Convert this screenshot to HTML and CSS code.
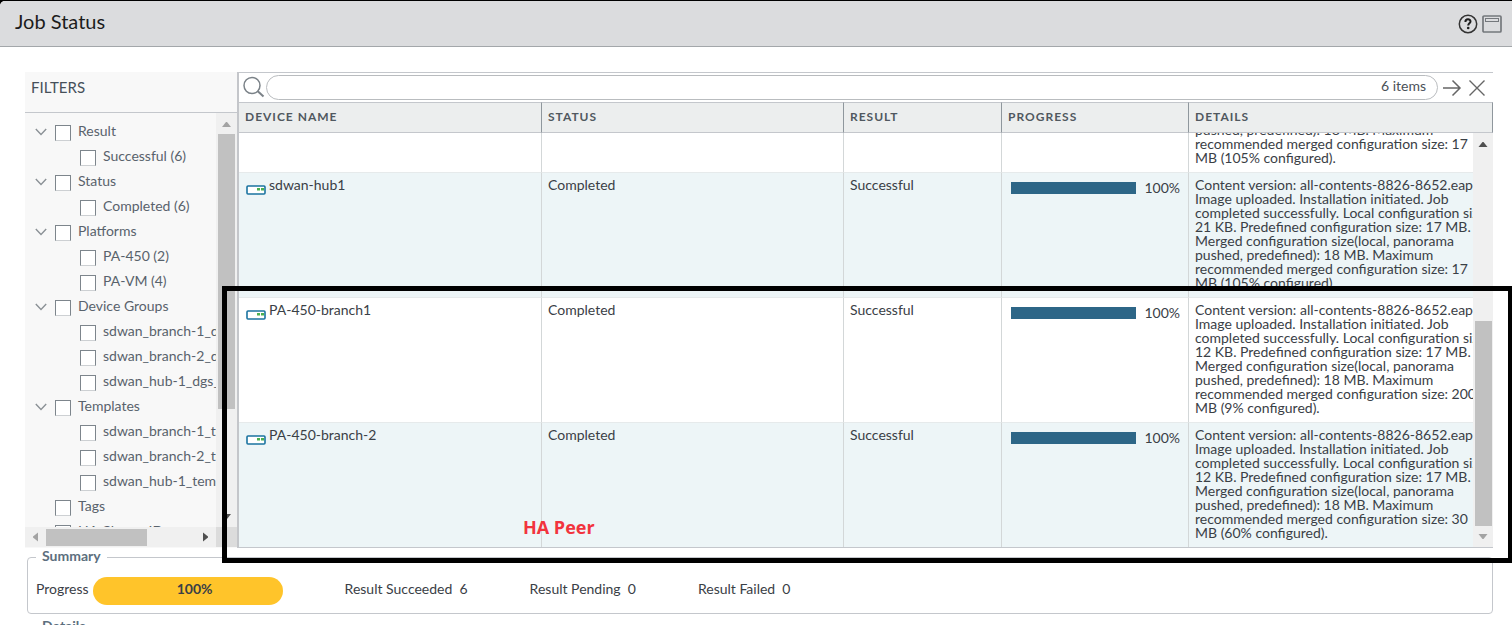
FILE: index.html
```html
<!DOCTYPE html>
<html lang="en">
<head>
<meta charset="utf-8">
<title>Job Status</title>
<link rel="stylesheet" href="styles.css">
</head>
<body>
<svg class="defs" aria-hidden="true">
  <symbol id="device" viewBox="0 0 20 10"><rect x="1" y="1" width="18" height="8" rx="1" fill="#fff" stroke="#1a73a0" stroke-width="1.6"/><path d="M11 3h3v2.400h-3zM15 3h3v2.400h-3z" fill="#4bb04f"/></symbol>
  <symbol id="chevron" viewBox="0 0 12 8"><path d="M.8 1 6 6.400 11.200 1" fill="none" stroke="#8b9196" stroke-width="1.400"/></symbol>
</svg>
<main class="dialog">
  <header class="titlebar">
    <h1 class="title">Job Status</h1>
    <button class="icon-button" type="button" aria-label="Help"><svg width="20" height="20" viewBox="0 0 20 20"><circle cx="10" cy="10" r="8.700" fill="none" stroke="#333" stroke-width="1.500"/><path d="M7.400 7.900c0-3.400 5.100-3.300 5.100-.5 0 1.900-2.300 1.900-2.300 4.200" fill="none" stroke="#1e1e1e" stroke-width="2"/><circle cx="10.200" cy="14" r="1.300" fill="#1e1e1e"/></svg></button>
    <button class="icon-button" type="button" aria-label="Maximize"><svg width="20" height="18" viewBox="0 0 20 18"><rect x="1" y="1" width="18" height="16" rx="1" fill="none" stroke="#74787c" stroke-width="1.700"/><rect x="3.500" y="3.500" width="13" height="3" fill="none" stroke="#74787c"/></svg></button>
  </header>

  <div class="content">
    <section class="workspace">
      <aside class="filters">
        <h2 class="filters-title">FILTERS</h2>
        <div class="filters-body">
          <ul class="tree">
            <li class="node"><svg class="chevron"><use href="#chevron"/></svg><label class="choice"><input type="checkbox">Result</label></li>
            <li class="node leaf"><label class="choice"><input type="checkbox">Successful (6)</label></li>
            <li class="node"><svg class="chevron"><use href="#chevron"/></svg><label class="choice"><input type="checkbox">Status</label></li>
            <li class="node leaf"><label class="choice"><input type="checkbox">Completed (6)</label></li>
            <li class="node"><svg class="chevron"><use href="#chevron"/></svg><label class="choice"><input type="checkbox">Platforms</label></li>
            <li class="node leaf"><label class="choice"><input type="checkbox">PA-450 (2)</label></li>
            <li class="node leaf"><label class="choice"><input type="checkbox">PA-VM (4)</label></li>
            <li class="node"><svg class="chevron"><use href="#chevron"/></svg><label class="choice"><input type="checkbox">Device Groups</label></li>
            <li class="node leaf"><label class="choice"><input type="checkbox">sdwan_branch-1_dgs_</label></li>
            <li class="node leaf"><label class="choice"><input type="checkbox">sdwan_branch-2_dgs_</label></li>
            <li class="node leaf"><label class="choice"><input type="checkbox">sdwan_hub-1_dgs_</label></li>
            <li class="node"><svg class="chevron"><use href="#chevron"/></svg><label class="choice"><input type="checkbox">Templates</label></li>
            <li class="node leaf"><label class="choice"><input type="checkbox">sdwan_branch-1_temp</label></li>
            <li class="node leaf"><label class="choice"><input type="checkbox">sdwan_branch-2_temp</label></li>
            <li class="node leaf"><label class="choice"><input type="checkbox">sdwan_hub-1_temp</label></li>
            <li class="node"><span class="chevron"></span><label class="choice"><input type="checkbox">Tags</label></li>
            <li class="node"><span class="chevron"></span><label class="choice"><input type="checkbox">HA Cluster ID</label></li>
          </ul>
          <div class="scroll-v"><span class="arrow up dim"></span><span class="track"><span class="thumb" style="height:74%"></span></span><span class="arrow down"></span></div>
          <div class="scroll-h"><span class="arrow left dim"></span><span class="track"><span class="thumb" style="width:68%"></span></span><span class="arrow right"></span></div>
          <div class="scroll-corner"></div>
        </div>
      </aside>

      <section class="grid">
        <div class="search">
          <svg class="search-icon" width="22" height="22" viewBox="0 0 22 22" fill="none" stroke="#7b8288" stroke-width="1.500"><circle cx="9" cy="9.500" r="8"/><path d="m14.800 15.200 5.700 5.300" stroke-width="2"/></svg>
          <div class="search-box"><input class="search-input" type="text" aria-label="Search jobs"><span class="count">6 items</span></div>
          <button class="icon-button" type="button" aria-label="Apply filter"><svg width="20" height="18" viewBox="0 0 20 18" fill="none" stroke="#666" stroke-width="1.500"><path d="M1 9h17M10.500 1.500 18 9l-7.500 7.500"/></svg></button>
          <button class="icon-button" type="button" aria-label="Clear filter"><svg width="18" height="18" viewBox="0 0 18 18" fill="none" stroke="#666" stroke-width="1.400"><path d="m1.500 1.500 15 15M16.500 1.500l-15 15"/></svg></button>
        </div>
        <table class="table table-head">
          <colgroup><col class="c-name"><col class="c-status"><col class="c-result"><col class="c-progress"><col></colgroup>
          <thead><tr><th>DEVICE NAME</th><th>STATUS</th><th>RESULT</th><th>PROGRESS</th><th>DETAILS</th></tr></thead>
        </table>
        <div class="grid-body">
          <table class="table table-rows">
            <colgroup><col class="c-name"><col class="c-status"><col class="c-result"><col class="c-progress"><col></colgroup>
            <tbody>
              <tr><td></td><td></td><td></td><td></td><td class="details">pushed, predefined): 18 MB. Maximum<br>recommended merged configuration size: 17<br>MB (105% configured).</td></tr>
              <tr><td><div class="device"><svg><use href="#device"/></svg>sdwan-hub1</div></td><td>Completed</td><td>Successful</td><td><div class="meter"><span class="bar"></span>100%</div></td><td class="details">Content version: all-contents-8826-8652.eap.<br>Image uploaded. Installation initiated. Job<br>completed successfully. Local configuration size:<br>21 KB. Predefined configuration size: 17 MB.<br>Merged configuration size(local, panorama<br>pushed, predefined): 18 MB. Maximum<br>recommended merged configuration size: 17<br>MB (105% configured).</td></tr>
              <tr><td><div class="device"><svg><use href="#device"/></svg>PA-450-branch1</div></td><td>Completed</td><td>Successful</td><td><div class="meter"><span class="bar"></span>100%</div></td><td class="details">Content version: all-contents-8826-8652.eap.<br>Image uploaded. Installation initiated. Job<br>completed successfully. Local configuration size:<br>12 KB. Predefined configuration size: 17 MB.<br>Merged configuration size(local, panorama<br>pushed, predefined): 18 MB. Maximum<br>recommended merged configuration size: 200<br>MB (9% configured).</td></tr>
              <tr><td><div class="device"><svg><use href="#device"/></svg>PA-450-branch-2</div></td><td>Completed</td><td>Successful</td><td><div class="meter"><span class="bar"></span>100%</div></td><td class="details">Content version: all-contents-8826-8652.eap.<br>Image uploaded. Installation initiated. Job<br>completed successfully. Local configuration size:<br>12 KB. Predefined configuration size: 17 MB.<br>Merged configuration size(local, panorama<br>pushed, predefined): 18 MB. Maximum<br>recommended merged configuration size: 30<br>MB (60% configured).</td></tr>
            </tbody>
          </table>
          <div class="scroll-v over"><span class="arrow up"></span><span class="track end"><span class="thumb" style="height:55%"></span></span><span class="arrow down dim"></span></div>
        </div>
      </section>
    </section>

    <fieldset class="group">
      <legend>Summary</legend>
      <div class="summary">
        <span class="overall">Progress <span class="pill">100%</span></span>
        <span>Result Succeeded&nbsp; 6</span>
        <span>Result Pending&nbsp; 0</span>
        <span>Result Failed&nbsp; 0</span>
      </div>
    </fieldset>
    <fieldset class="group">
      <legend>Details</legend>
    </fieldset>
  </div>

  <div class="callout"><strong class="callout-text">HA Peer</strong></div>
</main>
</body>
</html>
```
FILE: styles.css
```css
* { box-sizing: border-box; }
html { background: #000; }
body {
  margin: 0;
  padding-top: 1px;
  height: 100vh;
  overflow: hidden;
  font: 14px/18px Lato, "Open Sans", sans-serif;
  color: #3a4046;
}
h1, h2, ul { margin: 0; padding: 0; font-weight: 400; }
.defs { position: absolute; width: 0; height: 0; }
.dialog {
  position: relative;
  min-height: 100%;
  overflow: hidden;
  background: #fff;
  border-radius: 5px 0 0 0;
}
.titlebar {
  display: flex;
  align-items: center;
  gap: 4px;
  height: 46px;
  padding: 0 10px 0 15px;
  background: #dbdcde;
  border-bottom: 1px solid #a3a7aa;
}
.title { flex: 1; padding-bottom: 6px; font-size: 20px; line-height: 24px; color: #1c1c1c; }
.icon-button { display: flex; padding: 0; border: 0; background: none; }
.content { padding: 25px 19px 0 25px; }

.workspace { display: flex; height: 476px; }
.filters {
  display: flex;
  flex-direction: column;
  flex: none;
  width: 214px;
  padding-bottom: 1px;
  background: #f8f8f8;
  border-right: 2px solid #c4c6ca;
}
.filters-title {
  height: 41px;
  padding: 5px 6px;
  border-bottom: 1px solid #c4c7cc;
  font-size: 15px;
  line-height: 20px;
  color: #46505a;
}
.filters-body {
  display: grid;
  grid-template: minmax(0, 1fr) 20px / minmax(0, 1fr) 21px;
  flex: 1;
  min-height: 0;
}
.tree { overflow: hidden; padding: 6px 0 0 10px; list-style: none; }
.node { display: flex; align-items: center; height: 25px; color: #58626c; }
.leaf { padding-left: 45px; }
.chevron { flex: none; width: 12px; height: 8px; margin-right: 8px; }
.choice { display: flex; align-items: flex-start; gap: 7px; flex: none; white-space: nowrap; }
.choice input {
  appearance: none;
  width: 16px;
  height: 16px;
  margin: 3px 0 0;
  background: #fff;
  border: 1px solid #7d858c;
  border-bottom-color: #cdd0d3;
}

.scroll-v { display: flex; flex-direction: column; align-items: center; background: #f0f0f0; }
.scroll-h { display: flex; align-items: center; background: #f0f0f0; }
.scroll-corner { background: #dcdcdc; }
.track { display: flex; flex: 1; }
.scroll-v .track { flex-direction: column; width: 17px; }
.scroll-h .track { height: 17px; }
.end { justify-content: flex-end; }
.thumb { background: #c1c1c1; }
.arrow { width: 21px; height: 21px; background: #505050; clip-path: polygon(6px 14px, 15px 14px, 11px 9px, 10px 9px); }
.down { clip-path: polygon(6px 8px, 15px 8px, 11px 13px, 10px 13px); }
.left { clip-path: polygon(13px 6px, 13px 15px, 8px 11px, 8px 10px); }
.right { clip-path: polygon(8px 6px, 8px 15px, 13px 11px, 13px 10px); }
.dim { background: #a3a3a3; }

.grid {
  display: flex;
  flex-direction: column;
  flex: 1;
  min-width: 0;
  border: solid #c4c7cc;
  border-width: 1px 0;
}
.search { display: flex; align-items: center; gap: 6px; height: 29px; padding: 0 7px 0 4px; }
.search-icon { margin-bottom: 2px; }
.search-box {
  display: flex;
  align-items: center;
  flex: 1;
  height: 25px;
  margin: 0 -2px 0 -5px;
  padding: 0 11px;
  border: 1px solid #b9bcbf;
  border-radius: 13px;
}
.search-input { flex: 1; min-width: 0; border: 0; outline: 0; background: none; font: inherit; }
.count { padding-bottom: 4px; color: #4a5158; }

.table { width: 100%; table-layout: fixed; border-collapse: separate; border-spacing: 0; }
.c-name { width: 303px; }
.c-status { width: 302px; }
.c-result { width: 158px; }
.c-progress { width: 187px; }
th {
  height: 31px;
  padding: 0 6px 2px;
  background: #eceeee;
  border: solid #c4c7cc;
  border-width: 1px 1px 1px 0;
  border-right-color: #8f979d;
  text-align: left;
  font-size: 12px;
  letter-spacing: 1px;
  color: #50585f;
}
.grid-body {
  position: relative;
  display: flex;
  flex-direction: column;
  justify-content: flex-end;
  flex: 1;
  min-height: 0;
  overflow: hidden;
}
td {
  height: 125px;
  padding: 3px 6px;
  vertical-align: top;
  border-top: 1px solid #e6eaeb;
  border-right: 1px solid #d3d7d8;
}
td:last-child { border-right: 0; }
tr:nth-child(even) td { background: #edf5f7; }
.details { padding: 5px 0 5px 6px; line-height: 14px; white-space: nowrap; overflow: hidden; }
tr:first-child .details { vertical-align: bottom; padding-bottom: 7px; }
.device { display: flex; gap: 3px; }
.device svg { width: 20px; height: 10px; margin: 9px 0 0 1px; }
.meter { display: flex; align-items: center; gap: 8px; padding: 3px 2px 0 3px; }
.bar { flex: 1; height: 12px; background: #2d6687; }
.over { position: absolute; top: 0; right: 0; bottom: 0; width: 20px; }

.group { margin: 0 0 0 2px; padding: 0 8px 8px; border: 1px solid #c4c7cc; border-radius: 4px; }
.group + .group { margin-top: 4px; }
.group legend { padding: 0 6px 2px; line-height: 16px; font-weight: 700; color: #5d6f7e; }
.summary { display: flex; align-items: baseline; gap: 62px; padding-top: 11px; line-height: 16px; }
.overall { display: flex; align-items: baseline; gap: 4px; }
.pill {
  width: 190px;
  padding: 0 0 4px 14px;
  border-radius: 14px;
  background: #ffc42a;
  line-height: 24px;
  text-align: center;
  font-weight: 700;
}

.callout {
  position: absolute;
  top: 285px;
  right: -1px;
  left: 222px;
  height: 277px;
  border: 5px solid #000;
}
.callout-text {
  position: absolute;
  bottom: 19px;
  left: 296px;
  font: 700 18px/24px "Open Sans", "Noto Sans", sans-serif;
  color: #f2333d;
}
```
